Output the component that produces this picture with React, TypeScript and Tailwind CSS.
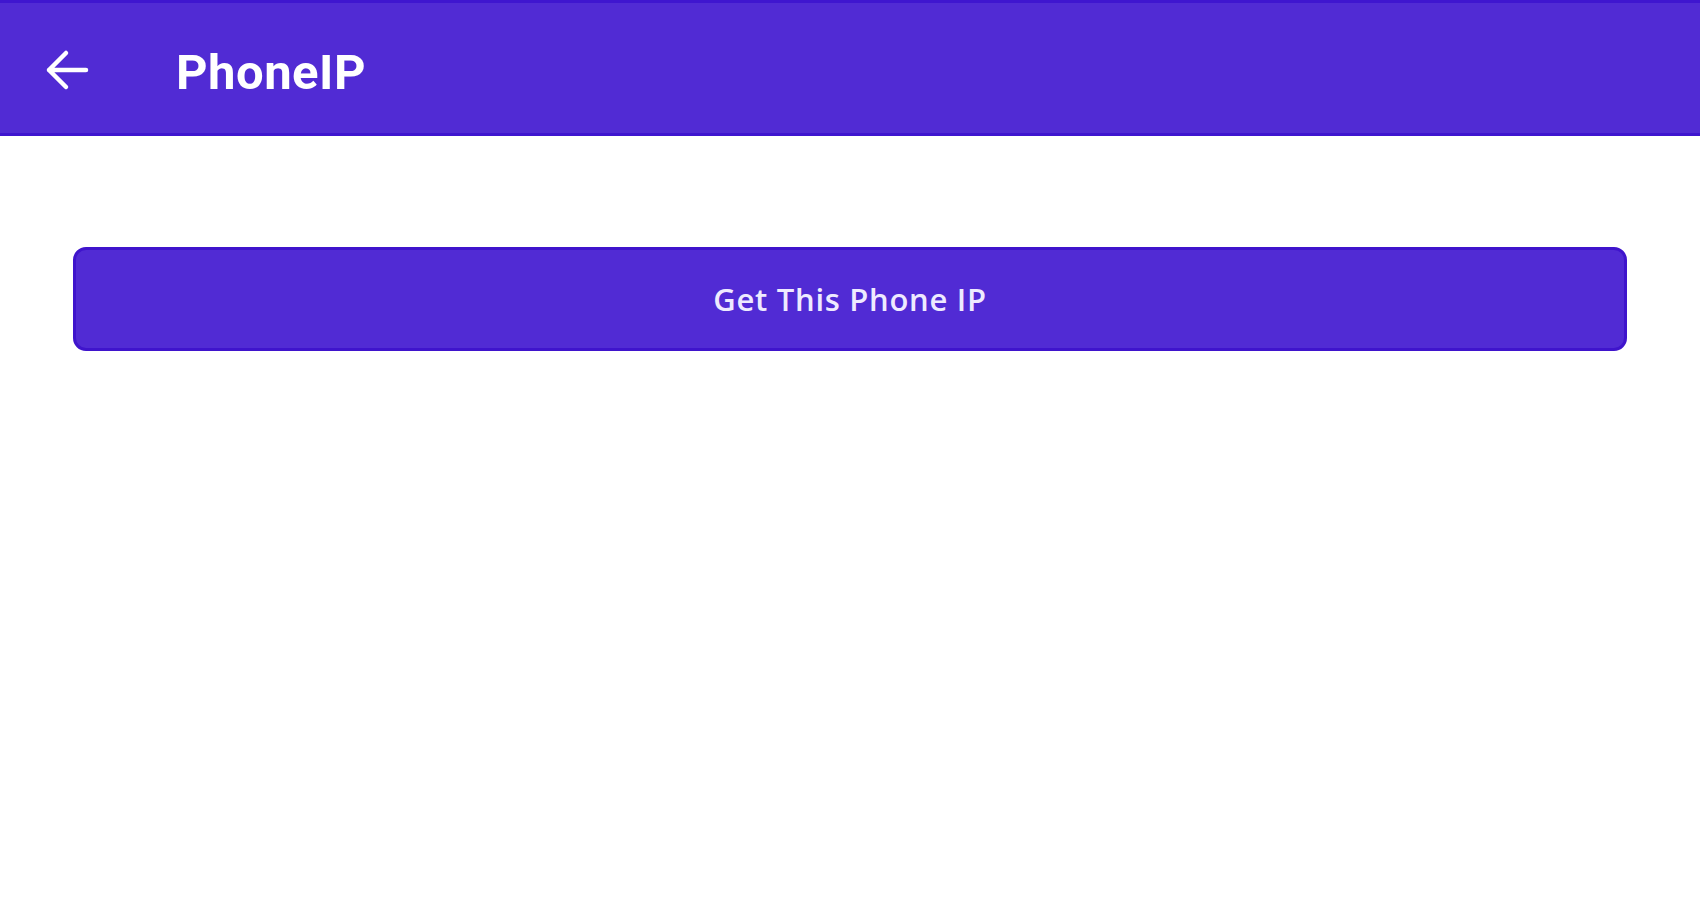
import { useState } from "react";

function BackArrow() {
  return (
    <svg width="48" height="44" viewBox="0 0 48 44" fill="none" aria-hidden="true">
      <path
        d="M5 22 H42 M5 22 L22 5 M5 22 L22 39"
        stroke="white"
        strokeWidth="4.5"
        strokeLinecap="round"
        strokeLinejoin="round"
      />
    </svg>
  );
}

export default function App() {
  const [ip, setIp] = useState<string | null>(null);

  return (
    <main className="min-h-screen w-full bg-white font-['Open_Sans',sans-serif]">
      <header className="flex h-[136px] items-center border-y-[3px] border-y-[#3f16cf] bg-[#512bd4] pl-[44px]">
        <button type="button" className="mt-[4px] flex items-center" aria-label="Back">
          <BackArrow />
        </button>
        <h1 className="ml-[84px] mt-[8px] font-['Roboto',sans-serif] text-[49px] font-bold leading-none tracking-[0.01em] text-white">
          PhoneIP
        </h1>
      </header>

      <section className="px-[73px] pt-[111px]">
        <button
          type="button"
          onClick={() => setIp("192.168.1.24")}
          className="flex h-[104px] w-full items-center justify-center rounded-[13px] border-[3px] border-[#3f14cc] bg-[#512bd4] text-[31px] font-semibold tracking-[0.7px] text-[#eeeaff]"
        >
          Get This Phone IP
        </button>
        {ip && (
          <p className="mt-6 text-center text-[24px] text-[#512bd4]">{ip}</p>
        )}
      </section>
    </main>
  );
}
